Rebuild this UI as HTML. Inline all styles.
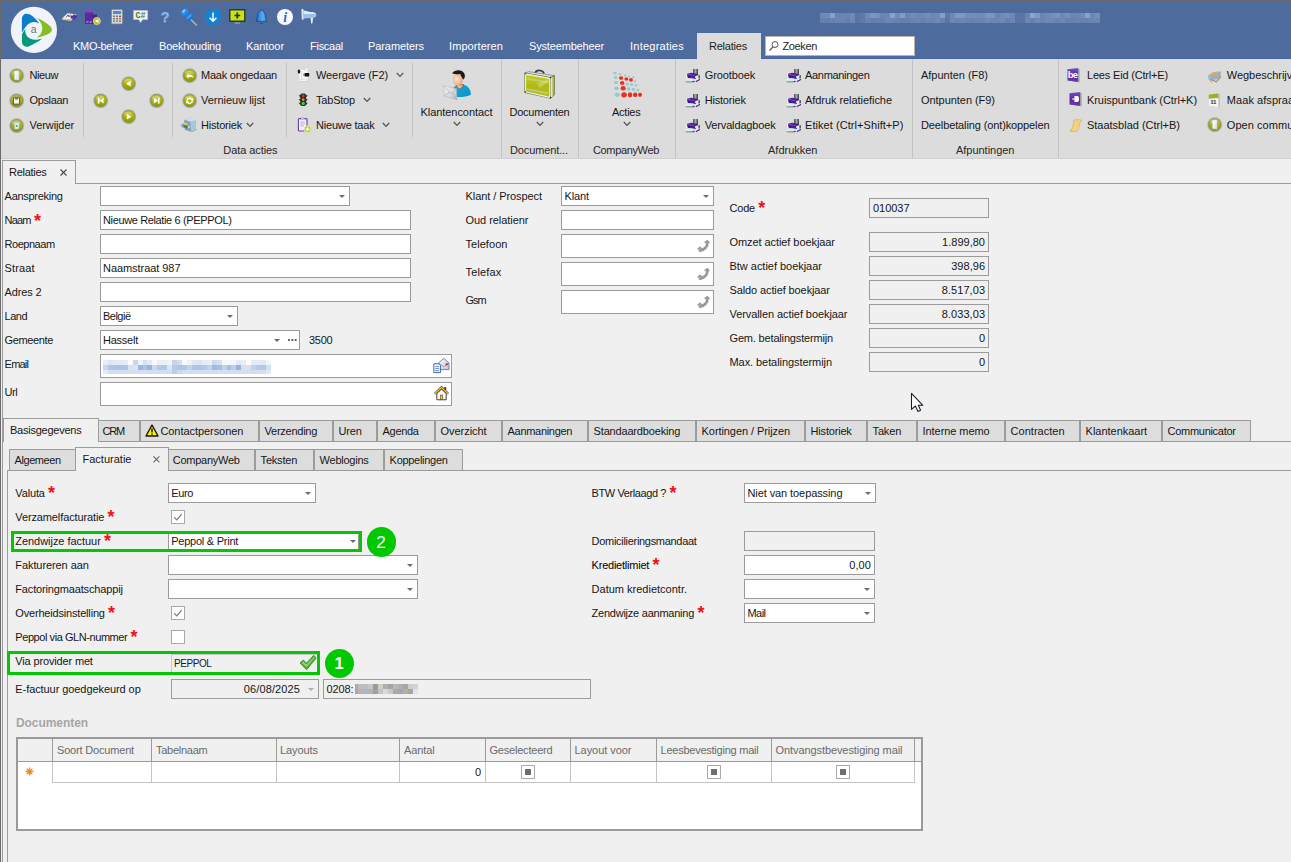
<!DOCTYPE html>
<html lang="nl"><head><meta charset="utf-8"><title>Relaties</title>
<style>
html,body{margin:0;padding:0}
body{width:1291px;height:862px;overflow:hidden;background:#f0f0f0;position:relative;font-family:"Liberation Sans",sans-serif;font-size:11px}
#app{position:absolute;left:0;top:0;width:1291px;height:862px;overflow:hidden}
#app>div,#app>span,#app>svg{position:absolute}
.t{white-space:nowrap;display:block}
svg{overflow:visible}
</style></head><body>
<svg width="0" height="0" style="position:absolute"><defs>
<linearGradient id="og" x1="0" y1="0" x2="0" y2="1"><stop offset="0" stop-color="#c4cc20"/><stop offset=".55" stop-color="#a8b00a"/><stop offset="1" stop-color="#8e9600"/></linearGradient>
<linearGradient id="pg" x1="0" y1="0" x2="0" y2="1"><stop offset="0" stop-color="#7a4cc0"/><stop offset=".5" stop-color="#5a2aa0"/><stop offset="1" stop-color="#6a3cb0"/></linearGradient>
<linearGradient id="pb" x1="0" y1="0" x2="1" y2="1"><stop offset="0" stop-color="#18b0e0"/><stop offset="1" stop-color="#0890c8"/></linearGradient>
<radialGradient id="skin" cx=".4" cy=".45" r=".7"><stop offset="0" stop-color="#fde3cc"/><stop offset=".7" stop-color="#f0b088"/><stop offset="1" stop-color="#d8895c"/></radialGradient>
<linearGradient id="feed" x1="0" y1="0" x2="1" y2="0"><stop offset="0" stop-color="#4a4a4a"/><stop offset=".5" stop-color="#a4a4a4"/><stop offset="1" stop-color="#3c3c3c"/></linearGradient>
<linearGradient id="pgw" x1="0" y1="0" x2="1" y2="1"><stop offset="0" stop-color="#ffffff"/><stop offset="1" stop-color="#cfe2f2"/></linearGradient>
<linearGradient id="env" x1="0" y1="0" x2="1" y2="1"><stop offset="0" stop-color="#ffffff"/><stop offset="1" stop-color="#b9c7e0"/></linearGradient>
<linearGradient id="envg" x1="0" y1="0" x2="1" y2="1"><stop offset="0" stop-color="#f2f3f5"/><stop offset=".6" stop-color="#d4d7dc"/><stop offset="1" stop-color="#b4b8be"/></linearGradient>
<linearGradient id="bcase" x1="0" y1="0" x2="0" y2="1"><stop offset="0" stop-color="#c6d616"/><stop offset=".5" stop-color="#adbb14"/><stop offset="1" stop-color="#b4c218"/></linearGradient>
<linearGradient id="bell" x1="0" y1="0" x2="1" y2="0"><stop offset="0" stop-color="#1568c8"/><stop offset=".6" stop-color="#58acf2"/><stop offset="1" stop-color="#2a86e0"/></linearGradient>
</defs></svg>
<div id="app">
<div style="left:0px;top:0px;width:1291px;height:59px;background:#4e6b9e;"></div>
<div style="left:0px;top:59px;width:1291px;height:99px;background:#dcdcdc;"></div>
<div style="left:0px;top:158px;width:1291px;height:1px;background:#d0d0d0;"></div>
<svg style="left:6px;top:2px" width="56" height="56" viewBox="0 0 56 56"><circle cx="27.9" cy="27.9" r="23.1" fill="#f0f4fa"/><path d="M15.9 30.6 V17.4 C15.9 12.6 19.6 10.6 24 12.6 C27.6 14.6 30.8 18 33.2 21.6 C29.6 19 24.6 19.4 21.4 22.8 C19.4 25 17.6 28 15.9 30.6 Z" fill="#0a7cc8"/><path d="M30.4 15.6 C35 17.6 40.6 21 44.2 24.2 C46.6 26.4 46.4 29.4 43.6 31.2 C39.6 33.6 35 35 30.6 35.6 C34.6 33.4 36.6 29.6 36.2 25.6 C35.8 21.6 33.4 18 30.4 15.6 Z" fill="#86bc24"/><path d="M19.4 26.8 C18.6 31 20.6 35 24.4 36.8 C28.2 38.4 32.6 37.8 36.6 36.2 C32.6 39.4 27.2 42.6 22.6 44.4 C19 45.6 15.9 43.6 15.9 39.6 V32.4 C16.8 30.4 18 28.4 19.4 26.8 Z" fill="#04987c"/><text x="27.6" y="31.4" font-size="10.5" text-anchor="middle" fill="#6e6e6e" style="font-family:'Liberation Sans',sans-serif">a</text></svg>
<span class="t " style="top:38.5px;font-size:11px;line-height:15px;letter-spacing:-0.300px;color:#ffffff;left:73px;">KMO-beheer</span>
<span class="t " style="top:38.5px;font-size:11px;line-height:15px;letter-spacing:-0.207px;color:#ffffff;left:159px;">Boekhouding</span>
<span class="t " style="top:38.5px;font-size:11px;line-height:15px;letter-spacing:-0.080px;color:#ffffff;left:246px;">Kantoor</span>
<span class="t " style="top:38.5px;font-size:11px;line-height:15px;letter-spacing:-0.263px;color:#ffffff;left:310px;">Fiscaal</span>
<span class="t " style="top:38.5px;font-size:11px;line-height:15px;letter-spacing:-0.087px;color:#ffffff;left:368px;">Parameters</span>
<span class="t " style="top:38.5px;font-size:11px;line-height:15px;letter-spacing:0.078px;color:#ffffff;left:449px;">Importeren</span>
<span class="t " style="top:38.5px;font-size:11px;line-height:15px;letter-spacing:-0.161px;color:#ffffff;left:529px;">Systeembeheer</span>
<span class="t " style="top:38.5px;font-size:11px;line-height:15px;letter-spacing:0.236px;color:#ffffff;left:630px;">Integraties</span>
<div style="left:0px;top:58px;width:697px;height:1px;background:#46649a;"></div>
<div style="left:761px;top:58px;width:530px;height:1px;background:#46649a;"></div>
<div style="left:697px;top:33px;width:64px;height:26px;background:#dcdcdc;"></div>
<span class="t " style="top:38.5px;font-size:11px;line-height:15px;letter-spacing:-0.219px;color:#1e1e1e;left:709px;">Relaties</span>
<div style="left:765px;top:36px;width:150px;height:20px;background:#ffffff;border:1px solid #b4b4b0;box-sizing:border-box;"></div>
<svg style="left:768px;top:40px" width="12" height="12" viewBox="0 0 12 12"><circle cx="7" cy="4.5" r="3" fill="none" stroke="#555" stroke-width="1"/><path d="M5 6.8 L1.5 10.5" stroke="#555" stroke-width="1.2"/></svg>
<span class="t " style="top:38.5px;font-size:11px;line-height:15px;letter-spacing:-0.353px;color:#1e1e1e;left:782.4px;">Zoeken</span>
<div style="left:820px;top:13px;width:280px;height:5px;background:linear-gradient(90deg,#6d88b6 0px 5px,#718bb8 5px 10px,#879ec5 10px 15px,#6a85b3 15px 20px,#6984b3 20px 25px,#6a85b4 25px 30px,#6e89b6 30px 35px,#5975a6 35px 40px,#5c78a9 40px 45px,#708ab8 45px 50px,#7c94be 50px 55px,#7891bc 55px 60px,#6b86b4 60px 65px,#6d87b5 65px 70px,#8aa1c8 70px 75px,#718bb8 75px 80px,#839ac3 80px 85px,#6a85b3 85px 90px,#728cb8 90px 95px,#6d88b6 95px 100px,#6f89b7 100px 105px,#738db9 105px 110px,#6c87b5 110px 115px,#708ab7 115px 120px,#879ec5 120px 125px,#5f7aaa 125px 130px,#6e89b6 130px 135px,#7f97c1 135px 140px,#7f97c1 140px 145px,#738db9 145px 150px,#748eba 150px 155px,#728cb9 155px 160px,#718ab8 160px 165px,#7c94be 165px 170px,#7c94be 170px 175px,#6a85b3 175px 180px,#718bb8 180px 185px,#748dba 185px 190px,#6e88b6 190px 195px,#5874a6 195px 200px,#5975a7 200px 205px,#6a85b3 205px 210px,#8ea4ca 210px 215px,#7f97c1 215px 220px,#6a85b4 220px 225px,#708ab7 225px 230px,#748dba 230px 235px,#7c94be 235px 240px,#6e88b6 240px 245px,#758fbb 245px 250px,#6b86b4 250px 255px,#6c87b5 255px 260px,#718bb8 260px 265px,#8aa1c8 265px 270px,#6e88b6 270px 275px,#758fbb 275px 280px)"></div>
<div style="left:820px;top:18px;width:280px;height:5px;background:linear-gradient(90deg,#6480af 0px 5px,#637faf 5px 10px,#6782b1 10px 15px,#6a84b3 15px 20px,#6983b2 20px 25px,#637faf 25px 30px,#6e87b5 30px 35px,#5874a6 35px 40px,#5d78a9 40px 45px,#6882b2 45px 50px,#637fae 50px 55px,#6681b1 55px 60px,#647faf 60px 65px,#6e87b5 65px 70px,#6b84b3 70px 75px,#6882b1 75px 80px,#637faf 80px 85px,#6580b0 85px 90px,#6883b2 90px 95px,#6b84b3 95px 100px,#6681b1 100px 105px,#6c86b4 105px 110px,#6b84b3 110px 115px,#6f88b6 115px 120px,#6681b1 120px 125px,#5774a5 125px 130px,#6d86b5 130px 135px,#6983b2 135px 140px,#6c85b4 140px 145px,#6b84b3 145px 150px,#6781b1 150px 155px,#6b85b3 155px 160px,#6983b2 160px 165px,#7088b7 165px 170px,#6c85b4 170px 175px,#6d86b4 175px 180px,#7189b7 180px 185px,#6681b1 185px 190px,#6c85b4 190px 195px,#5975a7 195px 200px,#5774a5 200px 205px,#6e86b5 205px 210px,#6681b0 210px 215px,#6f88b6 215px 220px,#6983b2 220px 225px,#6f88b6 225px 230px,#6f88b6 230px 235px,#6883b2 235px 240px,#6f88b6 240px 245px,#6480af 245px 250px,#6581b0 250px 255px,#6983b2 255px 260px,#6681b0 260px 265px,#6883b2 265px 270px,#6a84b3 270px 275px,#6c86b4 275px 280px)"></div>
<div style="left:83px;top:63px;width:1px;height:74px;background:#c3c3c3;"></div>
<div style="left:172px;top:63px;width:1px;height:74px;background:#c3c3c3;"></div>
<div style="left:286px;top:63px;width:1px;height:74px;background:#c3c3c3;"></div>
<div style="left:412px;top:63px;width:1px;height:74px;background:#c3c3c3;"></div>
<div style="left:501px;top:59px;width:1px;height:99px;background:#c3c3c3;"></div>
<div style="left:578px;top:59px;width:1px;height:99px;background:#c3c3c3;"></div>
<div style="left:675px;top:59px;width:1px;height:99px;background:#c3c3c3;"></div>
<div style="left:912px;top:59px;width:1px;height:99px;background:#c3c3c3;"></div>
<div style="left:1058px;top:59px;width:1px;height:99px;background:#c3c3c3;"></div>
<svg style="left:9.3px;top:67.7px" width="15.4" height="15.4" viewBox="0 0 18 18"><circle cx="9" cy="9" r="8.9" fill="#c4c4c0"/><circle cx="9" cy="9" r="8.2" fill="#a2a29e"/><circle cx="9" cy="9" r="6.9" fill="url(#og)" stroke="#858d08" stroke-width="0.6"/><ellipse cx="8" cy="5.6" rx="4.7" ry="2.3" fill="#fff" opacity=".22"/><path d="M6.2 3.6 L11.8 3.2 V14.2 L6.2 13.6 Z" fill="url(#pgw)" stroke="#a8bccc" stroke-width=".4"/></svg>
<span class="t " style="top:68.0px;font-size:11px;line-height:15px;letter-spacing:-0.412px;color:#161616;left:29.5px;">Nieuw</span>
<svg style="left:9.3px;top:92.7px" width="15.4" height="15.4" viewBox="0 0 18 18"><circle cx="9" cy="9" r="8.9" fill="#c4c4c0"/><circle cx="9" cy="9" r="8.2" fill="#a2a29e"/><circle cx="9" cy="9" r="6.9" fill="url(#og)" stroke="#858d08" stroke-width="0.6"/><ellipse cx="8" cy="5.6" rx="4.7" ry="2.3" fill="#fff" opacity=".22"/><path d="M5.2 5 H12.4 V13 H5.2 Z" fill="#f4f4f4" stroke="#444" stroke-width="1"/><rect x="6.8" y="5" width="4" height="2.6" fill="#777"/></svg>
<span class="t " style="top:93.0px;font-size:11px;line-height:15px;letter-spacing:-0.357px;color:#161616;left:29.5px;">Opslaan</span>
<svg style="left:9.3px;top:117.7px" width="15.4" height="15.4" viewBox="0 0 18 18"><circle cx="9" cy="9" r="8.9" fill="#c4c4c0"/><circle cx="9" cy="9" r="8.2" fill="#a2a29e"/><circle cx="9" cy="9" r="6.9" fill="url(#og)" stroke="#858d08" stroke-width="0.6"/><ellipse cx="8" cy="5.6" rx="4.7" ry="2.3" fill="#fff" opacity=".22"/><path d="M5.8 5.4 H12.2 L11.4 13 H6.6 Z" fill="#dff1ff" stroke="#8ab4d8" stroke-width=".6"/><path d="M8 8 L10 10.5 M10 8 L8 10.5" stroke="#2c9a2c" stroke-width="1"/></svg>
<span class="t " style="top:118.0px;font-size:11px;line-height:15px;letter-spacing:-0.082px;color:#161616;left:29.5px;">Verwijder</span>
<svg style="left:120.7px;top:75.6px" width="15.4" height="15.4" viewBox="0 0 18 18"><circle cx="9" cy="9" r="8.9" fill="#c4c4c0"/><circle cx="9" cy="9" r="8.2" fill="#a2a29e"/><circle cx="9" cy="9" r="6.9" fill="url(#og)" stroke="#858d08" stroke-width="0.6"/><ellipse cx="8" cy="5.6" rx="4.7" ry="2.3" fill="#fff" opacity=".22"/><path d="M11.4 5.6 V12.4 L5.8 9 Z" fill="#fff"/></svg>
<svg style="left:92.6px;top:92.6px" width="15.4" height="15.4" viewBox="0 0 18 18"><circle cx="9" cy="9" r="8.9" fill="#c4c4c0"/><circle cx="9" cy="9" r="8.2" fill="#a2a29e"/><circle cx="9" cy="9" r="6.9" fill="url(#og)" stroke="#858d08" stroke-width="0.6"/><ellipse cx="8" cy="5.6" rx="4.7" ry="2.3" fill="#fff" opacity=".22"/><path d="M12.4 5.6 V12.4 L7.4 9 Z M5.6 5.6 H7.6 V12.4 H5.6 Z" fill="#fff"/></svg>
<svg style="left:148.70000000000002px;top:92.6px" width="15.4" height="15.4" viewBox="0 0 18 18"><circle cx="9" cy="9" r="8.9" fill="#c4c4c0"/><circle cx="9" cy="9" r="8.2" fill="#a2a29e"/><circle cx="9" cy="9" r="6.9" fill="url(#og)" stroke="#858d08" stroke-width="0.6"/><ellipse cx="8" cy="5.6" rx="4.7" ry="2.3" fill="#fff" opacity=".22"/><path d="M5.6 5.6 V12.4 L10.6 9 Z M10.4 5.6 H12.4 V12.4 H10.4 Z" fill="#fff"/></svg>
<svg style="left:120.7px;top:108.7px" width="15.4" height="15.4" viewBox="0 0 18 18"><circle cx="9" cy="9" r="8.9" fill="#c4c4c0"/><circle cx="9" cy="9" r="8.2" fill="#a2a29e"/><circle cx="9" cy="9" r="6.9" fill="url(#og)" stroke="#858d08" stroke-width="0.6"/><ellipse cx="8" cy="5.6" rx="4.7" ry="2.3" fill="#fff" opacity=".22"/><path d="M6.8 5.6 V12.4 L12.4 9 Z" fill="#fff"/></svg>
<svg style="left:181.8px;top:67.6px" width="15.4" height="15.4" viewBox="0 0 18 18"><circle cx="9" cy="9" r="8.9" fill="#c4c4c0"/><circle cx="9" cy="9" r="8.2" fill="#a2a29e"/><circle cx="9" cy="9" r="6.9" fill="url(#og)" stroke="#858d08" stroke-width="0.6"/><ellipse cx="8" cy="5.6" rx="4.7" ry="2.3" fill="#fff" opacity=".22"/><path d="M4.6 9.6 L8 6 V8 C11 7.6 13 9 13.4 11.6 C12 10.2 10.4 10 8 10.6 V12.6 Z" fill="#fff"/></svg>
<span class="t " style="top:68.0px;font-size:11px;line-height:15px;letter-spacing:-0.228px;color:#161616;left:201px;">Maak ongedaan</span>
<svg style="left:181.8px;top:92.6px" width="15.4" height="15.4" viewBox="0 0 18 18"><circle cx="9" cy="9" r="8.9" fill="#c4c4c0"/><circle cx="9" cy="9" r="8.2" fill="#a2a29e"/><circle cx="9" cy="9" r="6.9" fill="url(#og)" stroke="#858d08" stroke-width="0.6"/><ellipse cx="8" cy="5.6" rx="4.7" ry="2.3" fill="#fff" opacity=".22"/><path d="M5 9 A4 4 0 0 1 12 6.6 L13.2 5.6 V9 H9.8 L11 8 A2.6 2.6 0 0 0 6.6 9 Z M13 9.4 A4 4 0 0 1 6 11.6 L4.8 12.6 V9.4 H8.2 L7 10.4 A2.6 2.6 0 0 0 11.4 9.4 Z" fill="#fff"/></svg>
<span class="t " style="top:93.0px;font-size:11px;line-height:15px;letter-spacing:-0.015px;color:#161616;left:201px;">Vernieuw lijst</span>
<svg style="left:174px;top:112px" width="30" height="25" viewBox="0 0 30 25"><path d="M17.10 19.71 L22.17 17.39 L23.04 17.68 L17.39 20.29 Z" fill="#8a8a8a"/><path d="M10.14 7.83 L12.17 6.81 L20.87 6.96 L21.59 8.41 L22.17 17.39 L17.10 19.71 L11.01 18.12 Z" fill="#7fa0ae"/><path d="M16.23 9.71 L21.59 8.26 L22.17 17.39 L17.10 19.71 Z" fill="#a6cad8"/><path d="M10.14 7.83 L12.17 6.81 L20.87 6.96 L21.59 8.41 L16.23 9.71 Z" fill="#c6e2ec"/><path d="M6.96 12.32 L9.86 11.16 L15.80 12.90 L15.80 16.38 L12.46 17.54 L7.25 14.64 Z" fill="#8eb0be"/><path d="M8.70 12.75 L15.07 13.91 L15.07 15.65 L12.46 16.81 L9.57 15.07 Z" fill="#56727f"/><ellipse cx="11.59" cy="11.88" rx="2.67" ry="1.10" transform="rotate(8 11.59 11.88)" fill="#e8c82e"/><path d="M13.62 14.49 L15.94 13.91 L15.80 15.51 L13.91 16.09 Z" fill="#dbe8ee"/></svg>
<span class="t " style="top:118.0px;font-size:11px;line-height:15px;letter-spacing:-0.198px;color:#161616;left:201px;">Historiek</span>
<svg style="left:246px;top:122px" width="8" height="6" viewBox="0 0 8 6"><path d="M0.8 1 L4 4.4 L7.2 1" fill="none" stroke="#555" stroke-width="1.3"/></svg>
<svg style="left:297px;top:67px" width="14" height="15" viewBox="0 0 14 15"><ellipse cx="6" cy="12.8" rx="5.6" ry="1.8" fill="#f6f6f6" stroke="#bdbdbd" stroke-width=".5"/><path d="M6.6 2.6 L9.4 .4 L11.4 1 L11 4 Z" fill="#fafafa" stroke="#c2c2c2" stroke-width=".5"/><path d="M1.6 4 C1.6 2.4 3 2 5 2.2 L10 3 C11 3.2 11.2 4 11.2 5 V10.4 C11.2 12 9.6 12.6 7.6 12.6 H4.4 C2.6 12.6 1.6 12 1.6 10.4 Z" fill="#f7f7f7" stroke="#c9c9c9" stroke-width=".5"/><path d="M4.6 4 V12.4" stroke="#d0d0d0" stroke-width=".8"/><ellipse cx="2" cy="4.6" rx="1.3" ry="2.1" fill="#151515"/><circle cx="2.2" cy="4.8" r=".5" fill="#2a8a3a"/><rect x="7.6" y="6" width="4.6" height="3.4" rx=".5" fill="#111"/><rect x="6.4" y="6.6" width="1.4" height="2.2" fill="#666"/></svg>
<span class="t " style="top:68.0px;font-size:11px;line-height:15px;letter-spacing:-0.090px;color:#161616;left:316px;">Weergave (F2)</span>
<svg style="left:396px;top:72px" width="8" height="6" viewBox="0 0 8 6"><path d="M0.8 1 L4 4.4 L7.2 1" fill="none" stroke="#555" stroke-width="1.3"/></svg>
<svg style="left:296.6px;top:92px" width="12.4" height="15.4" viewBox="0 0 16 18"><path d="M2 3.4 H14 L12 6 H4 Z M2 8.2 H14 L12 10.8 H4 Z M2 13 H14 L12 15.6 H4 Z" fill="#3a3a3a"/><rect x="4.2" y="1" width="7.6" height="16" rx="2.4" fill="#2c2c2c"/><circle cx="8" cy="4.2" r="1.8" fill="#c73a22"/><circle cx="8" cy="9" r="1.8" fill="#d88a1a"/><circle cx="8" cy="13.8" r="2.1" fill="#27e02a"/></svg>
<span class="t " style="top:93.0px;font-size:11px;line-height:15px;letter-spacing:-0.201px;color:#161616;left:316px;">TabStop</span>
<svg style="left:363px;top:97px" width="8" height="6" viewBox="0 0 8 6"><path d="M0.8 1 L4 4.4 L7.2 1" fill="none" stroke="#555" stroke-width="1.3"/></svg>
<svg style="left:296px;top:116px" width="18" height="18" viewBox="0 0 18 18"><rect x="2.4" y="2.6" width="8.6" height="12.4" rx="1" fill="#f3f0fa" stroke="#6a3aa8" stroke-width="1.1"/><rect x="5" y="1.2" width="3.4" height="2.4" fill="#bdbdbd"/><path d="M4.4 6 H8.6 M4.4 8 H9 M4.4 10 H7.6" stroke="#9a9ab0" stroke-width=".7"/><circle cx="11.6" cy="13.2" r="3.5" fill="#b9c832" stroke="#e8ecc0" stroke-width=".8"/><path d="M9.6 13.2 H13.6 M11.6 11.2 V15.2" stroke="#fff" stroke-width="1.3"/></svg>
<span class="t " style="top:118.0px;font-size:11px;line-height:15px;letter-spacing:-0.188px;color:#161616;left:316px;">Nieuwe taak</span>
<svg style="left:382px;top:122px" width="8" height="6" viewBox="0 0 8 6"><path d="M0.8 1 L4 4.4 L7.2 1" fill="none" stroke="#555" stroke-width="1.3"/></svg>
<span class="t " style="top:105.0px;font-size:11px;line-height:15px;letter-spacing:-0.060px;color:#161616;left:420.5px;">Klantencontact</span>
<svg style="left:453px;top:121px" width="8" height="6" viewBox="0 0 8 6"><path d="M0.8 1 L4 4.4 L7.2 1" fill="none" stroke="#555" stroke-width="1.3"/></svg>
<span class="t " style="top:105.0px;font-size:11px;line-height:15px;letter-spacing:-0.241px;color:#161616;left:509.5px;">Documenten</span>
<svg style="left:536px;top:121px" width="8" height="6" viewBox="0 0 8 6"><path d="M0.8 1 L4 4.4 L7.2 1" fill="none" stroke="#555" stroke-width="1.3"/></svg>
<span class="t " style="top:105.0px;font-size:11px;line-height:15px;letter-spacing:-0.245px;color:#161616;left:612px;">Acties</span>
<svg style="left:623px;top:121px" width="8" height="6" viewBox="0 0 8 6"><path d="M0.8 1 L4 4.4 L7.2 1" fill="none" stroke="#555" stroke-width="1.3"/></svg>
<span class="t " style="top:143.0px;font-size:11px;line-height:15px;letter-spacing:-0.078px;color:#262626;left:223.3px;">Data acties</span>
<span class="t " style="top:143.0px;font-size:11px;line-height:15px;letter-spacing:-0.122px;color:#262626;left:510px;">Document...</span>
<span class="t " style="top:143.0px;font-size:11px;line-height:15px;letter-spacing:-0.352px;color:#262626;left:593px;">CompanyWeb</span>
<span class="t " style="top:143.0px;font-size:11px;line-height:15px;letter-spacing:-0.007px;color:#262626;left:768px;">Afdrukken</span>
<span class="t " style="top:143.0px;font-size:11px;line-height:15px;letter-spacing:-0.026px;color:#262626;left:956px;">Afpuntingen</span>
<svg style="left:436px;top:64px" width="44" height="40" viewBox="0 0 44 40"><path d="M16.28 32.56 C15.81 26.05 17.67 21.86 20.93 20.93 L27.44 20.47 C32.56 21.86 34.88 26.05 34.88 30.70 C30.23 33.49 20.93 33.49 16.28 32.56 Z" fill="url(#pb)"/><path d="M20.47 20.93 C20.93 26.05 26.05 26.51 27.44 20.47 Z" fill="#f3b48c" stroke="#3a3a30" stroke-width=".5"/><ellipse cx="21.77" cy="15.81" rx="5.02" ry="5.95" fill="url(#skin)"/><path d="M16.05 9.30 C18.60 5.58 26.05 5.12 28.14 9.30 C29.77 12.09 28.37 14.88 27.21 15.58 C26.05 13.95 25.12 12.09 24.19 10.00 C21.40 10.47 18.60 10.47 16.05 9.30 Z" fill="#1a1a1a"/><path d="M7.67 21.86 L20.47 24.65 L20.93 35.81 L8.14 32.09 Z" fill="url(#envg)" stroke="#aeb2b8" stroke-width=".5"/><path d="M7.67 21.86 L15.35 29.77 L20.47 24.65 M8.14 32.09 L13.49 28.37 M20.93 35.81 L16.74 28.84" fill="none" stroke="#a4a8ae" stroke-width=".6"/></svg>
<svg style="left:518px;top:64px" width="44" height="40" viewBox="0 0 44 40"><path d="M17.30 8.84 C17.91 5.58 25.12 5.58 26.05 9.53" fill="none" stroke="#3e3e3e" stroke-width="1.7"/><path d="M6.74 9.07 L10.93 7.67 L36.51 11.63 L32.56 13.58 Z" fill="#e2e4de" stroke="#4a4c46" stroke-width=".5"/><path d="M32.56 13.58 L36.51 11.63 L36.51 30.79 L32.56 34.28 Z" fill="#a9b81a" stroke="#4a4c46" stroke-width=".5"/><path d="M32.56 13.58 L34.42 12.65 L34.42 32.56 L32.56 34.28 Z" fill="#e8e9e4"/><path d="M6.74 9.07 L32.56 13.58 L32.56 34.28 L6.74 28.47 Z" fill="url(#bcase)" stroke="#3c3e38" stroke-width=".6"/><path d="M7.44 10.00 L31.86 14.28 L31.86 33.40 L7.44 27.81 Z" fill="none" stroke="#eceee6" stroke-width="1.3"/><path d="M9.07 13.95 L30.23 17.30 L30.23 19.16 L9.07 15.72 Z" fill="#c9cf9a" opacity=".75"/><path d="M9.07 24.19 L30.23 28.47 L30.23 30.33 L9.07 25.95 Z" fill="#c9cf9a" opacity=".75"/><path d="M18.60 19.53 L30.70 15.35 L30.70 17.21 L21.86 24.19 Z" fill="#fff" opacity=".25"/><circle cx="32.56" cy="13.58" r=".8" fill="#1a1a1a"/><circle cx="32.56" cy="33.58" r=".8" fill="#1a1a1a"/><circle cx="7.35" cy="9.86" r=".7" fill="#2a2a2a"/><circle cx="7.35" cy="28.00" r=".7" fill="#2a2a2a"/></svg>
<svg style="left:605px;top:66px" width="45" height="38" viewBox="0 0 45 38"><ellipse cx="9.92" cy="7.05" rx="1.76" ry="1.23" fill="#8fc9d2"/><ellipse cx="15.20" cy="8.37" rx="1.59" ry="1.06" fill="#8fc9d2"/><ellipse cx="20.05" cy="9.26" rx="1.32" ry="0.88" fill="#8fc9d2"/><ellipse cx="24.15" cy="10.36" rx="1.23" ry="0.97" fill="#8fc9d2"/><ellipse cx="28.43" cy="11.24" rx="1.23" ry="0.88" fill="#8fc9d2"/><ellipse cx="10.58" cy="11.55" rx="1.76" ry="1.41" fill="#8fc9d2"/><ellipse cx="16.09" cy="12.12" rx="2.12" ry="1.76" fill="#e9301f"/><ellipse cx="21.38" cy="13.00" rx="2.03" ry="1.76" fill="#e9301f"/><ellipse cx="26.00" cy="13.88" rx="1.94" ry="1.76" fill="#e9301f"/><ellipse cx="29.97" cy="15.20" rx="1.23" ry="0.97" fill="#8fc9d2"/><ellipse cx="11.02" cy="16.53" rx="2.03" ry="1.59" fill="#8fc9d2"/><ellipse cx="17.19" cy="16.97" rx="2.29" ry="2.03" fill="#e9301f"/><ellipse cx="22.26" cy="18.07" rx="1.76" ry="1.59" fill="#8fc9d2"/><ellipse cx="26.66" cy="18.51" rx="1.50" ry="1.50" fill="#8fc9d2"/><ellipse cx="31.07" cy="19.39" rx="1.41" ry="1.23" fill="#8fc9d2"/><ellipse cx="11.55" cy="22.26" rx="2.29" ry="1.85" fill="#8fc9d2"/><ellipse cx="18.16" cy="22.26" rx="2.56" ry="2.20" fill="#e9301f"/><ellipse cx="23.58" cy="22.92" rx="1.94" ry="1.76" fill="#8fc9d2"/><ellipse cx="28.43" cy="23.36" rx="1.59" ry="1.50" fill="#8fc9d2"/><ellipse cx="32.83" cy="24.02" rx="1.32" ry="1.59" fill="#8fc9d2"/><ellipse cx="12.12" cy="28.87" rx="2.64" ry="2.03" fill="#8fc9d2"/><ellipse cx="19.04" cy="28.87" rx="2.82" ry="2.64" fill="#e9301f"/><ellipse cx="25.03" cy="28.87" rx="2.29" ry="2.56" fill="#e9301f"/><ellipse cx="30.19" cy="28.87" rx="2.20" ry="2.47" fill="#e9301f"/><ellipse cx="35.04" cy="28.87" rx="2.03" ry="2.03" fill="#e9301f"/></svg>
<svg style="left:682px;top:65.5px" width="22" height="20" viewBox="0 0 22 20"><rect x="11" y="3" width="5" height="5" fill="url(#feed)"/><ellipse cx="8.2" cy="15.4" rx="4.6" ry=".9" fill="#4c4c4c"/><path d="M4 8.6 L5.4 8 V13 H4 Z" fill="#ececec"/><path d="M5.2 7.7 L9.2 6.7 L16.1 7.9 V10.6 L12.9 12.7 L6 11.9 L5.2 10.2 Z" fill="#4b1c9a"/><path d="M6.2 8.5 L12.6 9.5" stroke="#8566c6" stroke-width=".7"/><path d="M6.6 11 L8 11.3" stroke="#0c0418" stroke-width="1"/><path d="M13.1 10.2 L18 8.6 V13.6 L13.5 16 Z" fill="#ededf0"/><path d="M16.2 9.5 L18 9 V12.2 L16.4 12.8 Z" fill="#56665a"/><path d="M13.7 15.1 L18 12.7 V14 L14 16.2 Z" fill="#5a1aa8"/><rect x="13" y="12" width="1.1" height="1" fill="#2a5ae0"/><ellipse cx="7" cy="13.9" rx="5" ry="1.7" fill="#d6eeee" stroke="#b4c6c6" stroke-width=".3"/></svg>
<span class="t " style="top:68.0px;font-size:11px;line-height:15px;letter-spacing:-0.101px;color:#161616;left:704.7px;">Grootboek</span>
<svg style="left:682px;top:90.5px" width="22" height="20" viewBox="0 0 22 20"><rect x="11" y="3" width="5" height="5" fill="url(#feed)"/><ellipse cx="8.2" cy="15.4" rx="4.6" ry=".9" fill="#4c4c4c"/><path d="M4 8.6 L5.4 8 V13 H4 Z" fill="#ececec"/><path d="M5.2 7.7 L9.2 6.7 L16.1 7.9 V10.6 L12.9 12.7 L6 11.9 L5.2 10.2 Z" fill="#4b1c9a"/><path d="M6.2 8.5 L12.6 9.5" stroke="#8566c6" stroke-width=".7"/><path d="M6.6 11 L8 11.3" stroke="#0c0418" stroke-width="1"/><path d="M13.1 10.2 L18 8.6 V13.6 L13.5 16 Z" fill="#ededf0"/><path d="M16.2 9.5 L18 9 V12.2 L16.4 12.8 Z" fill="#56665a"/><path d="M13.7 15.1 L18 12.7 V14 L14 16.2 Z" fill="#5a1aa8"/><rect x="13" y="12" width="1.1" height="1" fill="#2a5ae0"/><ellipse cx="7" cy="13.9" rx="5" ry="1.7" fill="#d6eeee" stroke="#b4c6c6" stroke-width=".3"/></svg>
<span class="t " style="top:93.0px;font-size:11px;line-height:15px;letter-spacing:-0.198px;color:#161616;left:704.7px;">Historiek</span>
<svg style="left:682px;top:115.5px" width="22" height="20" viewBox="0 0 22 20"><rect x="11" y="3" width="5" height="5" fill="url(#feed)"/><ellipse cx="8.2" cy="15.4" rx="4.6" ry=".9" fill="#4c4c4c"/><path d="M4 8.6 L5.4 8 V13 H4 Z" fill="#ececec"/><path d="M5.2 7.7 L9.2 6.7 L16.1 7.9 V10.6 L12.9 12.7 L6 11.9 L5.2 10.2 Z" fill="#4b1c9a"/><path d="M6.2 8.5 L12.6 9.5" stroke="#8566c6" stroke-width=".7"/><path d="M6.6 11 L8 11.3" stroke="#0c0418" stroke-width="1"/><path d="M13.1 10.2 L18 8.6 V13.6 L13.5 16 Z" fill="#ededf0"/><path d="M16.2 9.5 L18 9 V12.2 L16.4 12.8 Z" fill="#56665a"/><path d="M13.7 15.1 L18 12.7 V14 L14 16.2 Z" fill="#5a1aa8"/><rect x="13" y="12" width="1.1" height="1" fill="#2a5ae0"/><ellipse cx="7" cy="13.9" rx="5" ry="1.7" fill="#d6eeee" stroke="#b4c6c6" stroke-width=".3"/></svg>
<span class="t " style="top:118.0px;font-size:11px;line-height:15px;letter-spacing:-0.141px;color:#161616;left:704.7px;">Vervaldagboek</span>
<svg style="left:783px;top:65.5px" width="22" height="20" viewBox="0 0 22 20"><rect x="11" y="3" width="5" height="5" fill="url(#feed)"/><ellipse cx="8.2" cy="15.4" rx="4.6" ry=".9" fill="#4c4c4c"/><path d="M4 8.6 L5.4 8 V13 H4 Z" fill="#ececec"/><path d="M5.2 7.7 L9.2 6.7 L16.1 7.9 V10.6 L12.9 12.7 L6 11.9 L5.2 10.2 Z" fill="#4b1c9a"/><path d="M6.2 8.5 L12.6 9.5" stroke="#8566c6" stroke-width=".7"/><path d="M6.6 11 L8 11.3" stroke="#0c0418" stroke-width="1"/><path d="M13.1 10.2 L18 8.6 V13.6 L13.5 16 Z" fill="#ededf0"/><path d="M16.2 9.5 L18 9 V12.2 L16.4 12.8 Z" fill="#56665a"/><path d="M13.7 15.1 L18 12.7 V14 L14 16.2 Z" fill="#5a1aa8"/><rect x="13" y="12" width="1.1" height="1" fill="#2a5ae0"/><ellipse cx="7" cy="13.9" rx="5" ry="1.7" fill="#d6eeee" stroke="#b4c6c6" stroke-width=".3"/></svg>
<span class="t " style="top:68.0px;font-size:11px;line-height:15px;letter-spacing:-0.312px;color:#161616;left:805px;">Aanmaningen</span>
<svg style="left:783px;top:90.5px" width="22" height="20" viewBox="0 0 22 20"><rect x="11" y="3" width="5" height="5" fill="url(#feed)"/><ellipse cx="8.2" cy="15.4" rx="4.6" ry=".9" fill="#4c4c4c"/><path d="M4 8.6 L5.4 8 V13 H4 Z" fill="#ececec"/><path d="M5.2 7.7 L9.2 6.7 L16.1 7.9 V10.6 L12.9 12.7 L6 11.9 L5.2 10.2 Z" fill="#4b1c9a"/><path d="M6.2 8.5 L12.6 9.5" stroke="#8566c6" stroke-width=".7"/><path d="M6.6 11 L8 11.3" stroke="#0c0418" stroke-width="1"/><path d="M13.1 10.2 L18 8.6 V13.6 L13.5 16 Z" fill="#ededf0"/><path d="M16.2 9.5 L18 9 V12.2 L16.4 12.8 Z" fill="#56665a"/><path d="M13.7 15.1 L18 12.7 V14 L14 16.2 Z" fill="#5a1aa8"/><rect x="13" y="12" width="1.1" height="1" fill="#2a5ae0"/><ellipse cx="7" cy="13.9" rx="5" ry="1.7" fill="#d6eeee" stroke="#b4c6c6" stroke-width=".3"/></svg>
<span class="t " style="top:93.0px;font-size:11px;line-height:15px;letter-spacing:-0.058px;color:#161616;left:805px;">Afdruk relatiefiche</span>
<svg style="left:783px;top:115.5px" width="22" height="20" viewBox="0 0 22 20"><rect x="11" y="3" width="5" height="5" fill="url(#feed)"/><ellipse cx="8.2" cy="15.4" rx="4.6" ry=".9" fill="#4c4c4c"/><path d="M4 8.6 L5.4 8 V13 H4 Z" fill="#ececec"/><path d="M5.2 7.7 L9.2 6.7 L16.1 7.9 V10.6 L12.9 12.7 L6 11.9 L5.2 10.2 Z" fill="#4b1c9a"/><path d="M6.2 8.5 L12.6 9.5" stroke="#8566c6" stroke-width=".7"/><path d="M6.6 11 L8 11.3" stroke="#0c0418" stroke-width="1"/><path d="M13.1 10.2 L18 8.6 V13.6 L13.5 16 Z" fill="#ededf0"/><path d="M16.2 9.5 L18 9 V12.2 L16.4 12.8 Z" fill="#56665a"/><path d="M13.7 15.1 L18 12.7 V14 L14 16.2 Z" fill="#5a1aa8"/><rect x="13" y="12" width="1.1" height="1" fill="#2a5ae0"/><ellipse cx="7" cy="13.9" rx="5" ry="1.7" fill="#d6eeee" stroke="#b4c6c6" stroke-width=".3"/></svg>
<span class="t " style="top:118.0px;font-size:11px;line-height:15px;letter-spacing:0.061px;color:#161616;left:805px;">Etiket (Ctrl+Shift+P)</span>
<span class="t " style="top:68.0px;font-size:11px;line-height:15px;letter-spacing:-0.024px;color:#161616;left:921px;">Afpunten (F8)</span>
<span class="t " style="top:93.0px;font-size:11px;line-height:15px;letter-spacing:-0.047px;color:#161616;left:921px;">Ontpunten (F9)</span>
<span class="t " style="top:118.0px;font-size:11px;line-height:15px;letter-spacing:-0.118px;color:#161616;left:921px;">Deelbetaling (ont)koppelen</span>
<span class="t " style="top:68.0px;font-size:11px;line-height:15px;letter-spacing:-0.181px;color:#161616;left:1087px;">Lees Eid (Ctrl+E)</span>
<span class="t " style="top:93.0px;font-size:11px;line-height:15px;letter-spacing:-0.073px;color:#161616;left:1087px;">Kruispuntbank (Ctrl+K)</span>
<span class="t " style="top:118.0px;font-size:11px;line-height:15px;letter-spacing:-0.014px;color:#161616;left:1087px;">Staatsblad (Ctrl+B)</span>
<svg style="left:1067.4px;top:67.8px" width="13" height="15" viewBox="0 0 13 15"><path d="M.6 1.2 L11 0 L12.6 1 V14.6 L11 14 L.6 12.4 Z" fill="#9aa0a0"/><path d="M.6 1.2 L11 .2 V14 L.6 12.4 Z" fill="url(#pg)"/><text x="5.6" y="10.4" font-size="9.5" font-weight="bold" text-anchor="middle" fill="#fff" style="font-family:'Liberation Sans',sans-serif;letter-spacing:-.6px">be</text></svg>
<svg style="left:1068.8px;top:92.4px" width="13" height="15" viewBox="0 0 13 15"><path d="M.6 1.2 L11 0 L12.6 1 V14.6 L11 14 L.6 12.4 Z" fill="#9aa0a0"/><path d="M.6 1.2 L11 .2 V14 L.6 12.4 Z" fill="url(#pg)"/><path d="M3 7 H6.4 M6 4.6 H8.6 C9.8 4.6 9.8 9.4 8.6 9.4 H6 Z" fill="#fff" stroke="#fff" stroke-width="1.1"/></svg>
<svg style="left:1068.6px;top:118.8px" width="14" height="14" viewBox="0 0 14 14"><path d="M4.6 1.4 C7 .2 10 .6 13 1.2 C11.4 2.2 11 3.6 10.4 6 C9.8 8.6 9.6 10.6 8 12.2 C6 13.2 3 12.6 .8 11.6 C3 10.8 3.6 9 4 6.6 C4.4 4.4 4.8 2.8 4.6 1.4 Z" fill="#f1d27e" stroke="#d2aa52" stroke-width=".6"/><path d="M.8 11.6 C2.6 11 3.4 12.4 2.4 12.9" fill="#d8b25c"/></svg>
<svg style="left:1207px;top:69.5px" width="15" height="13" viewBox="0 0 15 13"><path d="M.6 6.4 C3 3 8 1 13.6 1.6 C14.6 4 13.6 7 11 9 C7 10.6 3 10 .6 6.4 Z" fill="#a9adb0"/><path d="M2 8.8 L9.4 11.8 L14 6.4" fill="none" stroke="#8d9194" stroke-width="1.2"/><path d="M3.4 5 C6 2.6 8.6 4 10.6 2.6" fill="none" stroke="#e6b422" stroke-width="1.3"/><circle cx="2.6" cy="8" r="1.7" fill="#8ec0ee"/><path d="M3 10 L5 12.4" stroke="#d8902a" stroke-width="1"/></svg>
<svg style="left:1208.4px;top:92px" width="13" height="16" viewBox="0 0 13 16"><path d="M.8 2.6 L10.4 1.2 L11.8 2 V15 L10.4 15.4 L.8 14 Z" fill="#b9b9b6"/><path d="M.8 2.6 L10.4 1.4 V15.2 L.8 14 Z" fill="#f6f6f4"/><path d="M.8 2.6 L10.4 1.4 V6 L.8 6.8 Z" fill="#9bb02a"/><rect x="2.6" y="7.8" width="5.6" height="4" fill="#e4e4e0"/><text x="5.4" y="11.6" font-size="5.5" font-weight="bold" text-anchor="middle" fill="#333" style="font-family:'Liberation Sans',sans-serif">11</text></svg>
<svg style="left:1206.8px;top:117.3px" width="15.4" height="15.4" viewBox="0 0 18 18"><circle cx="9" cy="9" r="8.9" fill="#c4c4c0"/><circle cx="9" cy="9" r="8.2" fill="#a2a29e"/><circle cx="9" cy="9" r="6.9" fill="url(#og)" stroke="#858d08" stroke-width="0.6"/><ellipse cx="8" cy="5.6" rx="4.7" ry="2.3" fill="#fff" opacity=".22"/><path d="M6.2 3.6 L11.8 3.2 V14.2 L6.2 13.6 Z" fill="url(#pgw)" stroke="#a8bccc" stroke-width=".4"/></svg>
<span class="t " style="top:68.0px;font-size:11px;line-height:15px;letter-spacing:-0.034px;color:#161616;left:1226.8px;">Wegbeschrijving</span>
<span class="t " style="top:93.0px;font-size:11px;line-height:15px;letter-spacing:0.062px;color:#161616;left:1226.8px;">Maak afspraak</span>
<span class="t " style="top:118.0px;font-size:11px;line-height:15px;letter-spacing:0.053px;color:#161616;left:1226.8px;">Open communicator</span>
<svg style="left:61px;top:9px" width="18" height="16" viewBox="0 0 18 16"><path d="M1 9.5 L6.5 4.2 L15 5.2 L10.6 10.8 Z" fill="#f4f4f4"/><path d="M1 9.5 L10.6 10.8 L10.4 12 L1 10.8 Z" fill="#d8d080"/><path d="M5 8.5 L7 5.8 L8 8 L9.4 5.6" stroke="#444" stroke-width=".8" fill="none"/><path d="M9.6 6.6 H12.4 V4.8 L16.4 8 L12.4 11.2 V9.4 H9.6 Z" fill="#5b2ca0"/></svg>
<svg style="left:84px;top:9px" width="18" height="17" viewBox="0 0 18 17"><rect x="1" y="1" width="8" height="14" fill="#5a2a9a"/><rect x="1" y="1" width="8" height="2.4" fill="#7a4fc0"/><rect x="8.6" y="5.6" width="4.4" height="9.4" fill="#4a2088"/><path d="M2.4 13 H4.4 M5.6 13 H7.6" stroke="#b090e0" stroke-width="1.4"/><circle cx="12.8" cy="12" r="3.6" fill="#b4c030" stroke="#e6eab8" stroke-width=".7"/><path d="M14.4 10.2 V13.8 L10.8 12 Z" fill="#fff"/></svg>
<svg style="left:111px;top:9px" width="12" height="16" viewBox="0 0 12 16"><rect x=".5" y=".5" width="11" height="14.4" rx="1" fill="#d9d9d6" stroke="#8c8c88" stroke-width=".8"/><rect x="2" y="2" width="8" height="3" fill="#3f8de0"/><g fill="#777"><rect x="2" y="6.6" width="2" height="1.4"/><rect x="5" y="6.6" width="2" height="1.4"/><rect x="2" y="9" width="2" height="1.4"/><rect x="5" y="9" width="2" height="1.4"/><rect x="8" y="9" width="2" height="1.4"/><rect x="2" y="11.4" width="2" height="1.4"/><rect x="5" y="11.4" width="2" height="1.4"/><rect x="8" y="11.4" width="2" height="1.4"/></g><rect x="8" y="6.6" width="2" height="1.4" fill="#e03030"/></svg>
<svg style="left:133px;top:10px" width="16" height="14" viewBox="0 0 16 14"><path d="M.6 .6 H14.6 V9.6 H9.6 L7.6 12.6 L5.6 9.6 H.6 Z" fill="#eef2f8" stroke="#c8d0e0" stroke-width=".5"/><text x="7.6" y="8" font-size="8.5" font-weight="bold" text-anchor="middle" fill="#5a7a10" font-family="Liberation Mono, monospace">C#</text></svg>
<span class="t" style="left:160.6px;top:6.8px;font-size:15px;line-height:20px;color:#8db6ea;font-weight:bold;text-shadow:0 .6px 0 #5f8fd0">?</span>
<svg style="left:180px;top:8px" width="18" height="18" viewBox="0 0 18 18"><path d="M10.4 11 L16.8 17.4" stroke="#b8b8b8" stroke-width="1.4"/><path d="M3.6 5.4 L6.6 2.6 L11 7.2 L8 10.2 Z" fill="#1c7ee0"/><ellipse cx="4.6" cy="3.8" rx="3.9" ry="2.9" transform="rotate(-45 4.6 3.8)" fill="#2a8cee"/><ellipse cx="3.8" cy="3" rx="2" ry="1.2" transform="rotate(-45 3.8 3)" fill="#8ecaff"/><ellipse cx="9.8" cy="9.2" rx="4.4" ry="2.4" transform="rotate(-45 9.8 9.2)" fill="#1a74d8"/><ellipse cx="9.2" cy="8.6" rx="3.4" ry="1.3" transform="rotate(-45 9.2 8.6)" fill="#3f9cf4"/></svg>
<svg style="left:205px;top:9px" width="16" height="16" viewBox="0 0 16 16"><circle cx="8" cy="8" r="8" fill="#0f84d4"/><path d="M8 3.4 V12 M4.6 8.8 L8 12.2 L11.4 8.8" fill="none" stroke="#fff" stroke-width="1.5"/></svg>
<svg style="left:229px;top:9px" width="17" height="16" viewBox="0 0 17 16"><rect x=".8" y=".8" width="15" height="11.4" fill="#c6e21c" stroke="#26340a" stroke-width="1.3"/><path d="M8.3 3.6 V9.4 M5.4 6.5 H11.2" stroke="#26340a" stroke-width="1.7"/><rect x="5.6" y="13.4" width="5.4" height="1.3" fill="#9aa0b0"/></svg>
<svg style="left:255px;top:9px" width="13" height="17" viewBox="0 0 13 17"><path d="M1 12.4 C2.6 10.4 2 6 3.4 4 C4.4 2.6 5.4 2.4 5.6 1 H7.4 C7.6 2.4 8.6 2.6 9.6 4 C11 6 10.4 10.4 12 12.4 Z" fill="url(#bell)" stroke="#14407a" stroke-width=".7"/><path d="M5 14 A1.6 1.6 0 0 0 8 14 Z" fill="#14407a"/></svg>
<svg style="left:277px;top:9px" width="16" height="16" viewBox="0 0 16 16"><circle cx="8" cy="8" r="8" fill="#f8f9fd"/><text x="8.2" y="12.8" font-size="14" font-style="italic" font-weight="bold" text-anchor="middle" fill="#3a62d8" font-family="Liberation Serif, serif">i</text></svg>
<svg style="left:300px;top:8px" width="18" height="17" viewBox="0 0 18 17"><path d="M1.4 1 L3.4 1 L3.8 11.4 L1.8 11.4 Z" fill="#e4e8ee"/><path d="M3.4 2.4 L10 4 C14.6 4 16.4 5.6 16.4 7.4 C16.4 9 14.6 10.2 10 10 L3.8 10.6 Z" fill="#9cc0e4"/><path d="M3.4 2.4 L10 4 C13 4 15 4.6 16 6 L3.6 6 Z" fill="#dfe9f4"/><path d="M10.6 10 H13 L12.4 15.6 H11.2 Z" fill="#e8ecf0"/></svg>
<div style="left:2px;top:183px;width:1289px;height:1px;background:#9b9b9b;"></div>
<div style="left:2px;top:160px;width:74px;height:24px;background:#f0f0f0;border:1px solid #9b9b9b;box-sizing:border-box;border-bottom:none;"></div>
<div style="left:2px;top:160px;width:1px;height:702px;background:#9b9b9b;"></div>
<span class="t " style="top:164.5px;font-size:11px;line-height:15px;letter-spacing:-0.281px;color:#161616;left:9px;">Relaties</span>
<svg style="left:59.7px;top:168.7px" width="7" height="7" viewBox="0 0 7 7"><path d="M.5 .5 L6.5 6.5 M6.5 .5 L.5 6.5" stroke="#4a4a4a" stroke-width="1.1"/></svg>
<span class="t " style="top:189.0px;font-size:11px;line-height:15px;letter-spacing:-0.290px;color:#161616;left:4.6px;">Aanspreking</span>
<span class="t " style="top:213.0px;font-size:11px;line-height:15px;letter-spacing:-0.836px;color:#161616;left:4.6px;">Naam</span>
<span class="t" style="left:33.9px;top:210.5px;font-size:18px;line-height:20px;color:#f0101a;font-weight:bold">*</span>
<span class="t " style="top:237.0px;font-size:11px;line-height:15px;letter-spacing:-0.480px;color:#161616;left:4.6px;">Roepnaam</span>
<span class="t " style="top:261.0px;font-size:11px;line-height:15px;letter-spacing:0.104px;color:#161616;left:4.6px;">Straat</span>
<span class="t " style="top:285.0px;font-size:11px;line-height:15px;letter-spacing:-0.134px;color:#161616;left:4.6px;">Adres 2</span>
<span class="t " style="top:309.0px;font-size:11px;line-height:15px;letter-spacing:-0.500px;color:#161616;left:4.6px;">Land</span>
<span class="t " style="top:333.0px;font-size:11px;line-height:15px;letter-spacing:-0.363px;color:#161616;left:4.6px;">Gemeente</span>
<span class="t " style="top:357.0px;font-size:11px;line-height:15px;letter-spacing:-0.800px;color:#161616;left:4.6px;">Email</span>
<span class="t " style="top:385.0px;font-size:11px;line-height:15px;letter-spacing:-0.510px;color:#161616;left:4.6px;">Url</span>
<div style="left:100px;top:186px;width:250px;height:20px;background:#fff;border:1px solid #9b9b9b;box-sizing:border-box;"></div>
<svg style="left:339px;top:195.0px" width="6" height="3" viewBox="0 0 6 3"><path d="M0 0 H6 L3 3.1 Z" fill="#6c6c6c"/></svg>
<div style="left:100px;top:210px;width:311px;height:20px;background:#fff;border:1px solid #9b9b9b;box-sizing:border-box;"></div>
<span class="t " style="top:213.0px;font-size:11px;line-height:15px;letter-spacing:-0.365px;color:#161616;left:103px;">Nieuwe Relatie 6 (PEPPOL)</span>
<div style="left:100px;top:234px;width:311px;height:20px;background:#fff;border:1px solid #9b9b9b;box-sizing:border-box;"></div>
<div style="left:100px;top:258px;width:311px;height:20px;background:#fff;border:1px solid #9b9b9b;box-sizing:border-box;"></div>
<span class="t " style="top:261.0px;font-size:11px;line-height:15px;letter-spacing:-0.058px;color:#161616;left:103px;">Naamstraat 987</span>
<div style="left:100px;top:282px;width:311px;height:20px;background:#fff;border:1px solid #9b9b9b;box-sizing:border-box;"></div>
<div style="left:100px;top:306px;width:138px;height:20px;background:#fff;border:1px solid #9b9b9b;box-sizing:border-box;"></div>
<span class="t " style="top:309.0px;font-size:11px;line-height:15px;letter-spacing:-0.516px;color:#161616;left:103px;">België</span>
<svg style="left:227px;top:315.0px" width="6" height="3" viewBox="0 0 6 3"><path d="M0 0 H6 L3 3.1 Z" fill="#6c6c6c"/></svg>
<div style="left:100px;top:330px;width:200px;height:20px;background:#fff;border:1px solid #9b9b9b;box-sizing:border-box;"></div>
<span class="t " style="top:333.0px;font-size:11px;line-height:15px;letter-spacing:-0.241px;color:#161616;left:103px;">Hasselt</span>
<svg style="left:274px;top:339.0px" width="6" height="3" viewBox="0 0 6 3"><path d="M0 0 H6 L3 3.1 Z" fill="#6c6c6c"/></svg>
<svg style="left:288px;top:338px" width="9" height="4" viewBox="0 0 9 4"><rect x="0" y="1" width="2" height="2" fill="#666"/><rect x="3.3" y="1" width="2" height="2" fill="#666"/><rect x="6.6" y="1" width="2" height="2" fill="#666"/></svg>
<span class="t " style="top:333.0px;font-size:11px;line-height:15px;letter-spacing:-0.250px;color:#161616;left:309px;">3500</span>
<div style="left:100px;top:354px;width:352px;height:24px;background:#fff;border:1px solid #9b9b9b;box-sizing:border-box;"></div>
<div style="left:103.3px;top:360px;width:167.7px;height:5px;background:linear-gradient(90deg,#e8eef8 0.00% 2.94%,#dde6f5 2.94% 5.88%,#e2eaf7 5.88% 8.82%,#e2eaf7 8.82% 11.76%,#e6edf8 11.76% 14.71%,#fafbfe 14.71% 17.65%,#c8d6ec 17.65% 20.59%,#eef2fa 20.59% 23.53%,#d6e2f3 23.53% 26.47%,#e2eaf6 26.47% 29.41%,#f6f8fc 29.41% 32.35%,#eaeff8 32.35% 35.29%,#eaeff8 35.29% 38.24%,#eef2fa 38.24% 41.18%,#c6d2ea 41.18% 44.12%,#d0def2 44.12% 47.06%,#fafbfe 47.06% 50.00%,#eef2f9 50.00% 52.94%,#dfe7f4 52.94% 55.88%,#dce5f3 55.88% 58.82%,#e6edf7 58.82% 61.76%,#e8eef8 61.76% 64.71%,#cdd9ee 64.71% 67.65%,#d6e0f1 67.65% 70.59%,#f4f7fc 70.59% 73.53%,#f6f8fc 73.53% 76.47%,#f4f6fb 76.47% 79.41%,#e4ebf7 79.41% 82.35%,#e8eef8 82.35% 85.29%,#ffffff 85.29% 88.24%,#e6ecf7 88.24% 91.18%,#e4ebf6 91.18% 94.12%,#e2e9f5 94.12% 97.06%,#f2f6fc 97.06% 100.00%)"></div>
<div style="left:103.3px;top:365px;width:167.7px;height:5px;background:linear-gradient(90deg,#c4d6f0 0.00% 2.94%,#b4c6e6 2.94% 5.88%,#aec2e4 5.88% 8.82%,#aec2e4 8.82% 11.76%,#b0c4e6 11.76% 14.71%,#d4e2f4 14.71% 17.65%,#dfe3ee 17.65% 20.59%,#9ab8e2 20.59% 23.53%,#aac6e4 23.53% 26.47%,#9ab4e0 26.47% 29.41%,#cad8ec 29.41% 32.35%,#b6c8e6 32.35% 35.29%,#aecae8 35.29% 38.24%,#dce4f0 38.24% 41.18%,#b6cce8 41.18% 44.12%,#b4c4e6 44.12% 47.06%,#b2c8e6 47.06% 50.00%,#c2d4ec 50.00% 52.94%,#aec4e4 52.94% 55.88%,#b4c2e2 55.88% 58.82%,#b0cae6 58.82% 61.76%,#c4d2ec 61.76% 64.71%,#a2bce0 64.71% 67.65%,#a8c0e2 67.65% 70.59%,#c4d0e4 70.59% 73.53%,#a6c0e4 73.53% 76.47%,#bcd2e6 76.47% 79.41%,#9ab2de 79.41% 82.35%,#d6e2f4 82.35% 85.29%,#dcdeee 85.29% 88.24%,#c2d0ea 88.24% 91.18%,#b8c8e6 91.18% 94.12%,#b0cae8 94.12% 97.06%,#d4e0f0 97.06% 100.00%)"></div>
<div style="left:103.3px;top:369.7px;width:167.7px;height:4.3px;background:linear-gradient(90deg,#e4ecf8 0.00% 2.94%,#d3dff1 2.94% 5.88%,#d3dff1 5.88% 8.82%,#d3dff1 8.82% 11.76%,#d3dff1 11.76% 14.71%,#d3dff1 14.71% 17.65%,#d3dff1 17.65% 20.59%,#d3dff1 20.59% 23.53%,#d3dff1 23.53% 26.47%,#d3dff1 26.47% 29.41%,#d3dff1 29.41% 32.35%,#d3dff1 32.35% 35.29%,#d3dff1 35.29% 38.24%,#d3dff1 38.24% 41.18%,#bccde8 41.18% 44.12%,#cbd9ee 44.12% 47.06%,#d3dff1 47.06% 50.00%,#d3dff1 50.00% 52.94%,#d3dff1 52.94% 55.88%,#d3dff1 55.88% 58.82%,#d3dff1 58.82% 61.76%,#d3dff1 61.76% 64.71%,#d3dff1 64.71% 67.65%,#d3dff1 67.65% 70.59%,#d3dff1 70.59% 73.53%,#d3dff1 73.53% 76.47%,#d3dff1 76.47% 79.41%,#d3dff1 79.41% 82.35%,#d3dff1 82.35% 85.29%,#d3dff1 85.29% 88.24%,#d3dff1 88.24% 91.18%,#d3dff1 91.18% 94.12%,#d3dff1 94.12% 97.06%,#e0e8f5 97.06% 100.00%)"></div>
<div style="left:100px;top:382px;width:352px;height:24px;background:#fff;border:1px solid #9b9b9b;box-sizing:border-box;"></div>
<svg style="left:433px;top:357px" width="17" height="17" viewBox="0 0 17 17"><path d="M5.4 6 L10.8 1.4 L16 6 V12.6 H5.4 Z" fill="url(#env)" stroke="#56668e" stroke-width=".8"/><path d="M5.4 6 L10.7 9.6 L16 6" fill="none" stroke="#7a88a8" stroke-width=".7"/><rect x="12.6" y="6.2" width="2.2" height="2.2" fill="#e03020"/><path d="M.8 6.8 H6 L7.6 8.4 V15.6 H.8 Z" fill="#f4f7fc" stroke="#3c56a0" stroke-width=".9"/><path d="M2.2 9.6 H6.2 M2.2 11.6 H6.2 M2.2 13.6 H6.2" stroke="#5b8ad8" stroke-width=".9"/></svg>
<svg style="left:433.6px;top:386.2px" width="15" height="15.4" viewBox="0 0 17 17"><rect x="11.6" y="1" width="2.2" height="4.6" fill="#8a1a1a"/><path d="M3.2 8.2 L8.5 3.4 L13.8 8.2 V15.4 H3.2 Z" fill="#fdfdff" stroke="#20283c" stroke-width="1"/><path d="M1 8.6 L8.5 1.4 L16 8.6" fill="none" stroke="#2a2410" stroke-width="2.6"/><path d="M1 8.6 L8.5 1.4 L16 8.6" fill="none" stroke="#f4c420" stroke-width="1.5"/><rect x="7" y="10" width="3" height="5.4" fill="#f0b818" stroke="#3a3010" stroke-width=".5"/></svg>
<span class="t " style="top:189.0px;font-size:11px;line-height:15px;letter-spacing:-0.076px;color:#161616;left:465.5px;">Klant / Prospect</span>
<span class="t " style="top:213.0px;font-size:11px;line-height:15px;letter-spacing:-0.048px;color:#161616;left:465.5px;">Oud relatienr</span>
<span class="t " style="top:237.0px;font-size:11px;line-height:15px;letter-spacing:0.047px;color:#161616;left:465.5px;">Telefoon</span>
<span class="t " style="top:265.0px;font-size:11px;line-height:15px;letter-spacing:0.161px;color:#161616;left:465.5px;">Telefax</span>
<span class="t " style="top:293.0px;font-size:11px;line-height:15px;letter-spacing:-1.073px;color:#161616;left:465.5px;">Gsm</span>
<div style="left:561px;top:186px;width:153px;height:20px;background:#fff;border:1px solid #9b9b9b;box-sizing:border-box;"></div>
<span class="t " style="top:189.0px;font-size:11px;line-height:15px;letter-spacing:-0.119px;color:#161616;left:564.5px;">Klant</span>
<svg style="left:703px;top:195.0px" width="6" height="3" viewBox="0 0 6 3"><path d="M0 0 H6 L3 3.1 Z" fill="#6c6c6c"/></svg>
<div style="left:561px;top:210px;width:153px;height:20px;background:#fff;border:1px solid #9b9b9b;box-sizing:border-box;"></div>
<div style="left:561px;top:234px;width:153px;height:24px;background:#fff;border:1px solid #9b9b9b;box-sizing:border-box;"></div>
<svg style="left:697px;top:240px" width="13" height="14" viewBox="0 0 13 14"><path d="M10.2 2.2 C10.9 6.4 7.4 10 3 10.6" fill="none" stroke="#9b9b9b" stroke-width="2.7" stroke-linecap="round"/><path d="M7.6 2.6 L10.6 .8 L12.2 3.4 M.8 9.6 L3 7.4 L5 9.2" fill="none" stroke="#9b9b9b" stroke-width="1.6" stroke-linejoin="round"/></svg>
<div style="left:561px;top:262px;width:153px;height:24px;background:#fff;border:1px solid #9b9b9b;box-sizing:border-box;"></div>
<svg style="left:697px;top:268px" width="13" height="14" viewBox="0 0 13 14"><path d="M10.2 2.2 C10.9 6.4 7.4 10 3 10.6" fill="none" stroke="#9b9b9b" stroke-width="2.7" stroke-linecap="round"/><path d="M7.6 2.6 L10.6 .8 L12.2 3.4 M.8 9.6 L3 7.4 L5 9.2" fill="none" stroke="#9b9b9b" stroke-width="1.6" stroke-linejoin="round"/></svg>
<div style="left:561px;top:290px;width:153px;height:24px;background:#fff;border:1px solid #9b9b9b;box-sizing:border-box;"></div>
<svg style="left:697px;top:296px" width="13" height="14" viewBox="0 0 13 14"><path d="M10.2 2.2 C10.9 6.4 7.4 10 3 10.6" fill="none" stroke="#9b9b9b" stroke-width="2.7" stroke-linecap="round"/><path d="M7.6 2.6 L10.6 .8 L12.2 3.4 M.8 9.6 L3 7.4 L5 9.2" fill="none" stroke="#9b9b9b" stroke-width="1.6" stroke-linejoin="round"/></svg>
<span class="t " style="top:200.5px;font-size:11px;line-height:15px;letter-spacing:-0.203px;color:#161616;left:729.5px;">Code</span>
<span class="t" style="left:758.3px;top:198px;font-size:18px;line-height:20px;color:#f0101a;font-weight:bold">*</span>
<div style="left:869px;top:198px;width:120px;height:20px;background:#f0f0f0;border:1px solid #9b9b9b;box-sizing:border-box;"></div>
<span class="t " style="top:200.5px;font-size:11px;line-height:15px;letter-spacing:-0.042px;color:#161616;left:873px;">010037</span>
<span class="t " style="top:234.5px;font-size:11px;line-height:15px;letter-spacing:-0.074px;color:#161616;left:729.5px;">Omzet actief boekjaar</span>
<div style="left:869px;top:232px;width:120px;height:20px;background:#f0f0f0;border:1px solid #9b9b9b;box-sizing:border-box;"></div>
<span class="t " style="top:234.5px;font-size:11px;line-height:15px;letter-spacing:0.016px;color:#161616;right:306.0px;">1.899,80</span>
<span class="t " style="top:258.5px;font-size:11px;line-height:15px;letter-spacing:-0.026px;color:#161616;left:729.5px;">Btw actief boekjaar</span>
<div style="left:869px;top:256px;width:120px;height:20px;background:#f0f0f0;border:1px solid #9b9b9b;box-sizing:border-box;"></div>
<span class="t " style="top:258.5px;font-size:11px;line-height:15px;letter-spacing:0.052px;color:#161616;right:305.9px;">398,96</span>
<span class="t " style="top:282.5px;font-size:11px;line-height:15px;letter-spacing:-0.110px;color:#161616;left:729.5px;">Saldo actief boekjaar</span>
<div style="left:869px;top:280px;width:120px;height:20px;background:#f0f0f0;border:1px solid #9b9b9b;box-sizing:border-box;"></div>
<span class="t " style="top:282.5px;font-size:11px;line-height:15px;letter-spacing:0.078px;color:#161616;right:305.9px;">8.517,03</span>
<span class="t " style="top:306.5px;font-size:11px;line-height:15px;letter-spacing:-0.077px;color:#161616;left:729.5px;">Vervallen actief boekjaar</span>
<div style="left:869px;top:304px;width:120px;height:20px;background:#f0f0f0;border:1px solid #9b9b9b;box-sizing:border-box;"></div>
<span class="t " style="top:306.5px;font-size:11px;line-height:15px;letter-spacing:0.078px;color:#161616;right:305.9px;">8.033,03</span>
<span class="t " style="top:330.5px;font-size:11px;line-height:15px;letter-spacing:-0.168px;color:#161616;left:729.5px;">Gem. betalingstermijn</span>
<div style="left:869px;top:328px;width:120px;height:20px;background:#f0f0f0;border:1px solid #9b9b9b;box-sizing:border-box;"></div>
<span class="t " style="top:330.5px;font-size:11px;line-height:15px;letter-spacing:-0.125px;color:#161616;right:306.1px;">0</span>
<span class="t " style="top:354.5px;font-size:11px;line-height:15px;letter-spacing:-0.070px;color:#161616;left:729.5px;">Max. betalingstermijn</span>
<div style="left:869px;top:352px;width:120px;height:20px;background:#f0f0f0;border:1px solid #9b9b9b;box-sizing:border-box;"></div>
<span class="t " style="top:354.5px;font-size:11px;line-height:15px;letter-spacing:-0.125px;color:#161616;right:306.1px;">0</span>
<div style="left:3px;top:441px;width:1288px;height:1px;background:#9b9b9b;"></div>
<div style="left:98px;top:420px;width:42px;height:22px;background:#dddddd;border:1px solid #9b9b9b;box-sizing:border-box;"></div>
<span class="t " style="top:424.0px;font-size:11px;line-height:15px;letter-spacing:-1.077px;color:#161616;left:102.4px;">CRM</span>
<div style="left:140px;top:420px;width:119px;height:22px;background:#dddddd;border:1px solid #9b9b9b;box-sizing:border-box;"></div>
<span class="t " style="top:424.0px;font-size:11px;line-height:15px;letter-spacing:-0.056px;color:#161616;left:160.4px;">Contactpersonen</span>
<div style="left:259px;top:420px;width:74px;height:22px;background:#dddddd;border:1px solid #9b9b9b;box-sizing:border-box;"></div>
<span class="t " style="top:424.0px;font-size:11px;line-height:15px;letter-spacing:-0.258px;color:#161616;left:264.6px;">Verzending</span>
<div style="left:333px;top:420px;width:44px;height:22px;background:#dddddd;border:1px solid #9b9b9b;box-sizing:border-box;"></div>
<span class="t " style="top:424.0px;font-size:11px;line-height:15px;letter-spacing:-0.211px;color:#161616;left:338.6px;">Uren</span>
<div style="left:377px;top:420px;width:58px;height:22px;background:#dddddd;border:1px solid #9b9b9b;box-sizing:border-box;"></div>
<span class="t " style="top:424.0px;font-size:11px;line-height:15px;letter-spacing:-0.328px;color:#161616;left:382.6px;">Agenda</span>
<div style="left:435px;top:420px;width:67px;height:22px;background:#dddddd;border:1px solid #9b9b9b;box-sizing:border-box;"></div>
<span class="t " style="top:424.0px;font-size:11px;line-height:15px;letter-spacing:-0.052px;color:#161616;left:440.6px;">Overzicht</span>
<div style="left:502px;top:420px;width:86px;height:22px;background:#dddddd;border:1px solid #9b9b9b;box-sizing:border-box;"></div>
<span class="t " style="top:424.0px;font-size:11px;line-height:15px;letter-spacing:-0.312px;color:#161616;left:507.6px;">Aanmaningen</span>
<div style="left:588px;top:420px;width:108px;height:22px;background:#dddddd;border:1px solid #9b9b9b;box-sizing:border-box;"></div>
<span class="t " style="top:424.0px;font-size:11px;line-height:15px;letter-spacing:-0.173px;color:#161616;left:593.6px;">Standaardboeking</span>
<div style="left:696px;top:420px;width:109px;height:22px;background:#dddddd;border:1px solid #9b9b9b;box-sizing:border-box;"></div>
<span class="t " style="top:424.0px;font-size:11px;line-height:15px;letter-spacing:-0.076px;color:#161616;left:701.6px;">Kortingen / Prijzen</span>
<div style="left:805px;top:420px;width:62px;height:22px;background:#dddddd;border:1px solid #9b9b9b;box-sizing:border-box;"></div>
<span class="t " style="top:424.0px;font-size:11px;line-height:15px;letter-spacing:-0.198px;color:#161616;left:810.6px;">Historiek</span>
<div style="left:867px;top:420px;width:50px;height:22px;background:#dddddd;border:1px solid #9b9b9b;box-sizing:border-box;"></div>
<span class="t " style="top:424.0px;font-size:11px;line-height:15px;letter-spacing:-0.175px;color:#161616;left:872.6px;">Taken</span>
<div style="left:917px;top:420px;width:88px;height:22px;background:#dddddd;border:1px solid #9b9b9b;box-sizing:border-box;"></div>
<span class="t " style="top:424.0px;font-size:11px;line-height:15px;letter-spacing:-0.076px;color:#161616;left:922.6px;">Interne memo</span>
<div style="left:1005px;top:420px;width:75px;height:22px;background:#dddddd;border:1px solid #9b9b9b;box-sizing:border-box;"></div>
<span class="t " style="top:424.0px;font-size:11px;line-height:15px;letter-spacing:0.016px;color:#161616;left:1010.6px;">Contracten</span>
<div style="left:1080px;top:420px;width:82px;height:22px;background:#dddddd;border:1px solid #9b9b9b;box-sizing:border-box;"></div>
<span class="t " style="top:424.0px;font-size:11px;line-height:15px;letter-spacing:-0.026px;color:#161616;left:1085.6px;">Klantenkaart</span>
<div style="left:1162px;top:420px;width:89px;height:22px;background:#dddddd;border:1px solid #9b9b9b;box-sizing:border-box;"></div>
<span class="t " style="top:424.0px;font-size:11px;line-height:15px;letter-spacing:-0.294px;color:#161616;left:1167.6px;">Communicator</span>
<div style="left:3px;top:418px;width:96px;height:24px;background:#f0f0f0;border:1px solid #9b9b9b;box-sizing:border-box;border-bottom:none;"></div>
<span class="t " style="top:423.0px;font-size:11px;line-height:15px;letter-spacing:-0.243px;color:#161616;left:10px;">Basisgegevens</span>
<svg style="left:145px;top:424px" width="14" height="13" viewBox="0 0 14 13"><path d="M7 1 L13 12 H1 Z" fill="#fff200" stroke="#141414" stroke-width="1.4" stroke-linejoin="round"/><path d="M7 4.4 V8.4" stroke="#111" stroke-width="1.4"/><rect x="6.3" y="9.4" width="1.4" height="1.4" fill="#111"/></svg>
<div style="left:7px;top:470px;width:1284px;height:1px;background:#9b9b9b;"></div>
<div style="left:7px;top:470px;width:1px;height:392px;background:#9b9b9b;"></div>
<div style="left:9px;top:449px;width:67px;height:22px;background:#dddddd;border:1px solid #9b9b9b;box-sizing:border-box;"></div>
<span class="t " style="top:453.0px;font-size:11px;line-height:15px;letter-spacing:-0.445px;color:#161616;left:14.6px;">Algemeen</span>
<div style="left:168px;top:449px;width:87px;height:22px;background:#dddddd;border:1px solid #9b9b9b;box-sizing:border-box;"></div>
<span class="t " style="top:453.0px;font-size:11px;line-height:15px;letter-spacing:-0.252px;color:#161616;left:172.7px;">CompanyWeb</span>
<div style="left:255px;top:449px;width:59px;height:22px;background:#dddddd;border:1px solid #9b9b9b;box-sizing:border-box;"></div>
<span class="t " style="top:453.0px;font-size:11px;line-height:15px;letter-spacing:-0.205px;color:#161616;left:260.6px;">Teksten</span>
<div style="left:314px;top:449px;width:70px;height:22px;background:#dddddd;border:1px solid #9b9b9b;box-sizing:border-box;"></div>
<span class="t " style="top:453.0px;font-size:11px;line-height:15px;letter-spacing:-0.241px;color:#161616;left:319.6px;">Weblogins</span>
<div style="left:384px;top:449px;width:79px;height:22px;background:#dddddd;border:1px solid #9b9b9b;box-sizing:border-box;"></div>
<span class="t " style="top:453.0px;font-size:11px;line-height:15px;letter-spacing:-0.293px;color:#161616;left:389.6px;">Koppelingen</span>
<div style="left:75px;top:447px;width:94px;height:24px;background:#f0f0f0;border:1px solid #9b9b9b;box-sizing:border-box;border-bottom:none;"></div>
<span class="t " style="top:452.0px;font-size:11px;line-height:15px;letter-spacing:0.006px;color:#161616;left:82.5px;">Facturatie</span>
<svg style="left:152px;top:455px" width="9" height="9" viewBox="0 0 9 9"><path d="M1.4 1.4 L7.4 7.4 M7.4 1.4 L1.4 7.4" stroke="#666" stroke-width="1.1"/></svg>
<span class="t " style="top:485.5px;font-size:11px;line-height:15px;letter-spacing:-0.151px;color:#161616;left:15.3px;">Valuta</span>
<span class="t" style="left:48.099999999999994px;top:483px;font-size:18px;line-height:20px;color:#f0101a;font-weight:bold">*</span>
<div style="left:168px;top:483px;width:148px;height:20px;background:#fff;border:1px solid #9b9b9b;box-sizing:border-box;"></div>
<span class="t " style="top:485.5px;font-size:11px;line-height:15px;letter-spacing:-0.312px;color:#161616;left:171.2px;">Euro</span>
<svg style="left:305px;top:492.0px" width="6" height="3" viewBox="0 0 6 3"><path d="M0 0 H6 L3 3.1 Z" fill="#6c6c6c"/></svg>
<span class="t " style="top:509.5px;font-size:11px;line-height:15px;letter-spacing:-0.119px;color:#161616;left:15.3px;">Verzamelfacturatie</span>
<span class="t" style="left:107.6px;top:507px;font-size:18px;line-height:20px;color:#f0101a;font-weight:bold">*</span>
<div style="left:171px;top:510px;width:14px;height:14px;background:#fff;border:1px solid #a9a9a9;box-sizing:border-box;"></div>
<svg style="left:173px;top:513px" width="10" height="8" viewBox="0 0 10 8"><path d="M1.2 4.2 L3.8 6.8 L8.8 1.2" fill="none" stroke="#7a7a7a" stroke-width="1.2"/></svg>
<div style="left:168px;top:533px;width:191px;height:18px;background:#fff;border:1px solid #9b9b9b;box-sizing:border-box;"></div>
<span class="t " style="top:533.5px;font-size:11px;line-height:15px;letter-spacing:-0.044px;color:#161616;left:15.3px;">Zendwijze factuur</span>
<span class="t" style="left:104.1px;top:531px;font-size:18px;line-height:20px;color:#f0101a;font-weight:bold">*</span>
<span class="t " style="top:533.5px;font-size:11px;line-height:15px;letter-spacing:-0.241px;color:#161616;left:171.2px;">Peppol &amp; Print</span>
<svg style="left:350px;top:540.0px" width="6" height="3" viewBox="0 0 6 3"><path d="M0 0 H6 L3 3.1 Z" fill="#6c6c6c"/></svg>
<div style="left:11px;top:531px;width:351px;height:21px;border:3px solid #04c604;box-sizing:border-box;"></div>
<span class="t " style="top:557.5px;font-size:11px;line-height:15px;letter-spacing:-0.083px;color:#161616;left:15.3px;">Faktureren aan</span>
<div style="left:168px;top:555px;width:250px;height:20px;background:#fff;border:1px solid #9b9b9b;box-sizing:border-box;"></div>
<svg style="left:407px;top:564.0px" width="6" height="3" viewBox="0 0 6 3"><path d="M0 0 H6 L3 3.1 Z" fill="#6c6c6c"/></svg>
<span class="t " style="top:581.5px;font-size:11px;line-height:15px;letter-spacing:-0.153px;color:#161616;left:15.3px;">Factoringmaatschappij</span>
<div style="left:168px;top:579px;width:250px;height:20px;background:#fff;border:1px solid #9b9b9b;box-sizing:border-box;"></div>
<svg style="left:407px;top:588.0px" width="6" height="3" viewBox="0 0 6 3"><path d="M0 0 H6 L3 3.1 Z" fill="#6c6c6c"/></svg>
<div style="left:366.7px;top:527.4px;width:29.7px;height:29.7px;border-radius:50%;background:#02c802"></div>
<span class="t " style="top:531.9px;font-size:17px;line-height:21px;letter-spacing:0.000px;color:#fff;left:376.3px;">2</span>
<span class="t " style="top:605.5px;font-size:11px;line-height:15px;letter-spacing:-0.183px;color:#161616;left:15.3px;">Overheidsinstelling</span>
<span class="t" style="left:108.1px;top:603px;font-size:18px;line-height:20px;color:#f0101a;font-weight:bold">*</span>
<div style="left:171px;top:606px;width:14px;height:14px;background:#fff;border:1px solid #a9a9a9;box-sizing:border-box;"></div>
<svg style="left:173px;top:609px" width="10" height="8" viewBox="0 0 10 8"><path d="M1.2 4.2 L3.8 6.8 L8.8 1.2" fill="none" stroke="#7a7a7a" stroke-width="1.2"/></svg>
<span class="t " style="top:629.5px;font-size:11px;line-height:15px;letter-spacing:-0.433px;color:#161616;left:15.3px;">Peppol via GLN-nummer</span>
<span class="t" style="left:130.6px;top:627px;font-size:18px;line-height:20px;color:#f0101a;font-weight:bold">*</span>
<div style="left:171px;top:630px;width:14px;height:14px;background:#fff;border:1px solid #a9a9a9;box-sizing:border-box;"></div>
<div style="left:171px;top:654px;width:148px;height:19px;background:#f0f0f0;border:1px solid #c8c8c8;box-sizing:border-box;"></div>
<span class="t " style="top:653.5px;font-size:11px;line-height:15px;letter-spacing:-0.151px;color:#161616;left:15.3px;">Via provider met</span>
<span class="t " style="top:656.5px;font-size:10px;line-height:14px;letter-spacing:-0.422px;color:#161616;left:174px;">PEPPOL</span>
<svg style="left:299px;top:654px" width="18" height="17" viewBox="0 0 18 17"><path d="M1 9 L4.4 6 L7.4 9.2 L14.8 1.2 L17.2 4 L7.6 15.8 Z" fill="#4fac30" stroke="#2e7a1e" stroke-width=".7"/><path d="M2.6 9 L4.4 7.6 L7.4 10.8 L15 3 L15.6 3.8 L7.6 13 Z" fill="#a8e08a" opacity=".8"/></svg>
<div style="left:7px;top:651px;width:313px;height:24px;border:3px solid #04c604;box-sizing:border-box;"></div>
<div style="left:324.7px;top:648.7px;width:29.6px;height:29.6px;border-radius:50%;background:#02c802"></div>
<span class="t " style="top:653.0px;font-size:16.5px;line-height:20.5px;letter-spacing:0.000px;color:#fff;font-weight:bold;left:334.6px;">1</span>
<span class="t " style="top:681.5px;font-size:11px;line-height:15px;letter-spacing:-0.076px;color:#161616;left:15.3px;">E-factuur goedgekeurd op</span>
<div style="left:171px;top:679px;width:148px;height:20px;background:#f0f0f0;border:1px solid #9b9b9b;box-sizing:border-box;"></div>
<span class="t " style="top:681.5px;font-size:11px;line-height:15px;letter-spacing:0.138px;color:#161616;right:990.9px;">06/08/2025</span>
<svg style="left:308px;top:688.0px" width="6" height="3" viewBox="0 0 6 3"><path d="M0 0 H6 L3 3.1 Z" fill="#b0b0b0"/></svg>
<div style="left:323px;top:679px;width:268px;height:20px;background:#f0f0f0;border:1px solid #9b9b9b;box-sizing:border-box;"></div>
<span class="t " style="top:681.5px;font-size:11px;line-height:15px;letter-spacing:-0.113px;color:#161616;left:326.5px;">0208:</span>
<div style="left:355px;top:684px;width:63px;height:5px;background:linear-gradient(90deg,#b4a8b4 0px 3px,#bebec0 3px 8px,#bdbdc1 8px 13px,#c6c6c6 13px 18px,#9a9a9c 18px 23px,#d6cdc2 23px 28px,#a9b0b8 28px 33px,#a3a3a3 33px 38px,#b8b8b8 38px 43px,#adb1b5 43px 48px,#aea4a6 48px 53px,#cfcfc6 53px 58px,#cfd0e0 58px 63px)"></div>
<div style="left:355px;top:689px;width:63px;height:5px;background:linear-gradient(90deg,#b0a4b0 0px 3px,#b8b5b2 3px 8px,#b0b6c4 8px 13px,#b4b5b0 13px 18px,#a89ca4 18px 23px,#c0c6c8 23px 28px,#dcd8d2 28px 33px,#c8c8c8 33px 38px,#a8aab2 38px 43px,#a4a6ac 43px 48px,#b8aea8 48px 53px,#a6a6a8 53px 58px,#dfe5ee 58px 63px)"></div>
<span class="t " style="top:485.5px;font-size:11px;line-height:15px;letter-spacing:-0.403px;color:#161616;left:591.6px;">BTW Verlaagd ?</span>
<span class="t" style="left:669.4px;top:483px;font-size:18px;line-height:20px;color:#f0101a;font-weight:bold">*</span>
<div style="left:744px;top:483px;width:132px;height:20px;background:#fff;border:1px solid #9b9b9b;box-sizing:border-box;"></div>
<span class="t " style="top:485.5px;font-size:11px;line-height:15px;letter-spacing:-0.089px;color:#161616;left:747.5px;">Niet van toepassing</span>
<svg style="left:865px;top:492.0px" width="6" height="3" viewBox="0 0 6 3"><path d="M0 0 H6 L3 3.1 Z" fill="#6c6c6c"/></svg>
<span class="t " style="top:533.5px;font-size:11px;line-height:15px;letter-spacing:-0.299px;color:#161616;left:591.6px;">Domicilieringsmandaat</span>
<div style="left:744px;top:531px;width:131px;height:20px;background:#f0f0f0;border:1px solid #9b9b9b;box-sizing:border-box;"></div>
<span class="t " style="top:557.5px;font-size:11px;line-height:15px;letter-spacing:-0.233px;color:#000;left:591.6px;">Kredietlimiet</span>
<span class="t" style="left:652.4px;top:555px;font-size:18px;line-height:20px;color:#f0101a;font-weight:bold">*</span>
<div style="left:744px;top:555px;width:131px;height:20px;background:#fff;border:1px solid #9b9b9b;box-sizing:border-box;"></div>
<span class="t " style="top:557.5px;font-size:11px;line-height:15px;letter-spacing:0.141px;color:#161616;right:419.9px;">0,00</span>
<span class="t " style="top:581.5px;font-size:11px;line-height:15px;letter-spacing:0.004px;color:#161616;left:591.6px;">Datum kredietcontr.</span>
<div style="left:744px;top:579px;width:131px;height:20px;background:#fff;border:1px solid #9b9b9b;box-sizing:border-box;"></div>
<svg style="left:864px;top:588.0px" width="6" height="3" viewBox="0 0 6 3"><path d="M0 0 H6 L3 3.1 Z" fill="#6c6c6c"/></svg>
<span class="t " style="top:605.5px;font-size:11px;line-height:15px;letter-spacing:-0.240px;color:#161616;left:591.6px;">Zendwijze aanmaning</span>
<span class="t" style="left:697.4px;top:603px;font-size:18px;line-height:20px;color:#f0101a;font-weight:bold">*</span>
<div style="left:744px;top:603px;width:131px;height:20px;background:#fff;border:1px solid #9b9b9b;box-sizing:border-box;"></div>
<span class="t " style="top:605.5px;font-size:11px;line-height:15px;letter-spacing:-0.539px;color:#161616;left:747.5px;">Mail</span>
<svg style="left:864px;top:612.0px" width="6" height="3" viewBox="0 0 6 3"><path d="M0 0 H6 L3 3.1 Z" fill="#6c6c6c"/></svg>
<span class="t " style="top:715.0px;font-size:12px;line-height:16px;letter-spacing:-0.067px;color:#a6a6a6;font-weight:bold;left:16px;">Documenten</span>
<div style="left:16px;top:737px;width:907px;height:94px;background:#fff;border:2px solid #9a9a9a;box-sizing:border-box;"></div>
<div style="left:18px;top:739px;width:903px;height:22px;background:#f0f0f0;"></div>
<div style="left:18px;top:761px;width:903px;height:1px;background:#9a9a9a;"></div>
<div style="left:52px;top:782px;width:863px;height:1px;background:#c4c4c4;"></div>
<div style="left:52px;top:739px;width:1px;height:22px;background:#9a9a9a;"></div>
<div style="left:52px;top:762px;width:1px;height:21px;background:#c4c4c4;"></div>
<div style="left:151px;top:739px;width:1px;height:22px;background:#9a9a9a;"></div>
<div style="left:151px;top:762px;width:1px;height:21px;background:#c4c4c4;"></div>
<div style="left:276px;top:739px;width:1px;height:22px;background:#9a9a9a;"></div>
<div style="left:276px;top:762px;width:1px;height:21px;background:#c4c4c4;"></div>
<div style="left:399px;top:739px;width:1px;height:22px;background:#9a9a9a;"></div>
<div style="left:399px;top:762px;width:1px;height:21px;background:#c4c4c4;"></div>
<div style="left:485px;top:739px;width:1px;height:22px;background:#9a9a9a;"></div>
<div style="left:485px;top:762px;width:1px;height:21px;background:#c4c4c4;"></div>
<div style="left:570px;top:739px;width:1px;height:22px;background:#9a9a9a;"></div>
<div style="left:570px;top:762px;width:1px;height:21px;background:#c4c4c4;"></div>
<div style="left:656px;top:739px;width:1px;height:22px;background:#9a9a9a;"></div>
<div style="left:656px;top:762px;width:1px;height:21px;background:#c4c4c4;"></div>
<div style="left:771px;top:739px;width:1px;height:22px;background:#9a9a9a;"></div>
<div style="left:771px;top:762px;width:1px;height:21px;background:#c4c4c4;"></div>
<div style="left:914px;top:739px;width:1px;height:22px;background:#9a9a9a;"></div>
<div style="left:914px;top:762px;width:1px;height:21px;background:#c4c4c4;"></div>
<span class="t " style="top:743.0px;font-size:11px;line-height:15px;letter-spacing:-0.181px;color:#6a6a6a;left:57px;">Soort Document</span>
<span class="t " style="top:743.0px;font-size:11px;line-height:15px;letter-spacing:-0.260px;color:#6a6a6a;left:156px;">Tabelnaam</span>
<span class="t " style="top:743.0px;font-size:11px;line-height:15px;letter-spacing:-0.080px;color:#6a6a6a;left:280px;">Layouts</span>
<span class="t " style="top:743.0px;font-size:11px;line-height:15px;letter-spacing:-0.120px;color:#6a6a6a;left:404px;">Aantal</span>
<span class="t " style="top:743.0px;font-size:11px;line-height:15px;letter-spacing:-0.206px;color:#6a6a6a;left:489.5px;">Geselecteerd</span>
<span class="t " style="top:743.0px;font-size:11px;line-height:15px;letter-spacing:-0.048px;color:#6a6a6a;left:574.5px;">Layout voor</span>
<span class="t " style="top:743.0px;font-size:11px;line-height:15px;letter-spacing:-0.239px;color:#6a6a6a;left:660.5px;">Leesbevestiging mail</span>
<span class="t " style="top:743.0px;font-size:11px;line-height:15px;letter-spacing:-0.084px;color:#6a6a6a;left:775.5px;">Ontvangstbevestiging mail</span>
<span class="t " style="top:765.0px;font-size:11px;line-height:15px;letter-spacing:-0.125px;color:#161616;right:810.1px;">0</span>
<div style="left:521px;top:765px;width:14px;height:14px;background:#fff;border:1px solid #a9a9a9;box-sizing:border-box;"></div>
<div style="left:525px;top:769px;width:6px;height:6px;background:#6e6e6e;"></div>
<div style="left:707px;top:765px;width:14px;height:14px;background:#fff;border:1px solid #a9a9a9;box-sizing:border-box;"></div>
<div style="left:711px;top:769px;width:6px;height:6px;background:#6e6e6e;"></div>
<div style="left:836px;top:765px;width:14px;height:14px;background:#fff;border:1px solid #a9a9a9;box-sizing:border-box;"></div>
<div style="left:840px;top:769px;width:6px;height:6px;background:#6e6e6e;"></div>
<svg style="left:24.8px;top:767.4px" width="9" height="9" viewBox="0 0 11 11"><g stroke="#f08a24" stroke-width="1.6"><path d="M5.5 .6 V10.4 M.6 5.5 H10.4 M2 2 L9 9 M9 2 L2 9"/></g><circle cx="5.5" cy="5.5" r="2.4" fill="#f08a24"/></svg>
<svg style="left:900px;top:385px" width="36" height="35" viewBox="0 0 36 35"><path d="M11.5 8.4 V24.4 L15.4 21 L18 26.5 L20.6 25.3 L18.3 20.3 H22.8 Z" fill="#fff" stroke="#1c1c28" stroke-width="1.05" stroke-linejoin="round"/></svg>
<div style="left:0px;top:0px;width:1291px;height:1px;background:#6a6a6a;"></div>
<div style="left:0px;top:0px;width:1px;height:862px;background:#6a6a6a;"></div>
</div></body></html>
